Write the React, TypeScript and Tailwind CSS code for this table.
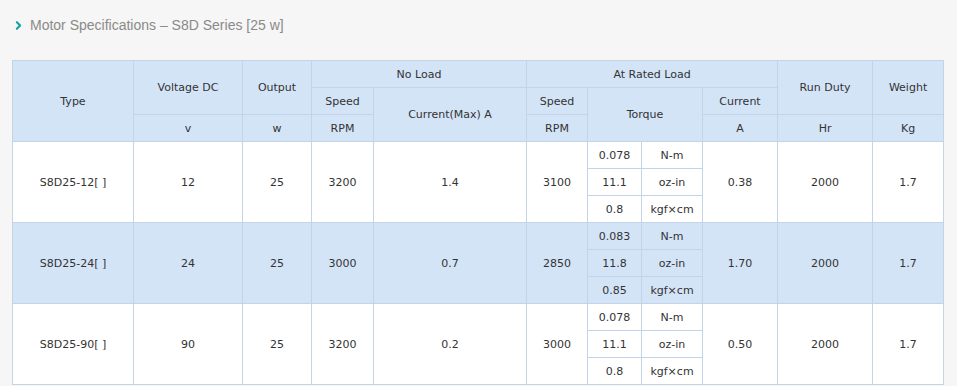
import { ChevronRight } from 'lucide-react'

type Motor = {
    type: string
    voltage: string
    output: string
    noLoadSpeed: string
    noLoadCurrent: string
    ratedSpeed: string
    torque: [string, string, string]
    current: string
    runDuty: string
    weight: string
}

const motors: Motor[] = [
    { type: 'S8D25-12[ ]', voltage: '12', output: '25', noLoadSpeed: '3200', noLoadCurrent: '1.4', ratedSpeed: '3100', torque: ['0.078', '11.1', '0.8'], current: '0.38', runDuty: '2000', weight: '1.7' },
    { type: 'S8D25-24[ ]', voltage: '24', output: '25', noLoadSpeed: '3000', noLoadCurrent: '0.7', ratedSpeed: '2850', torque: ['0.083', '11.8', '0.85'], current: '1.70', runDuty: '2000', weight: '1.7' },
    { type: 'S8D25-90[ ]', voltage: '90', output: '25', noLoadSpeed: '3200', noLoadCurrent: '0.2', ratedSpeed: '3000', torque: ['0.078', '11.1', '0.8'], current: '0.50', runDuty: '2000', weight: '1.7' },
]

const units = ['N-m', 'oz-in', 'kgf×cm']

const cell = 'border border-[#c3d4e8] text-center align-middle px-0 pb-0 pt-[2px]'

export default function App() {
    return (
        <div className="w-[957px] h-[386px] overflow-hidden bg-[#f6f6f6] pl-3 pt-[15px] font-['DejaVu_Sans',sans-serif] text-[11px] text-[#333]">
            {/* Titulo */}
            <div className="flex items-center h-[20px] font-['Liberation_Sans',sans-serif] text-[14px] text-[#8a8a8a]">
                <ChevronRight className="w-[13px] h-[13px] text-[#17a2a7] mr-[5px]" strokeWidth={4} />
                <span>Motor Specifications – S8D Series [25 w]</span>
            </div>

            <table className="mt-[25px] w-[932px] table-fixed border-collapse bg-white">
                <colgroup>
                    <col className="w-[121px]" />
                    <col className="w-[109px]" />
                    <col className="w-[69px]" />
                    <col className="w-[62px]" />
                    <col className="w-[153px]" />
                    <col className="w-[61px]" />
                    <col className="w-[54px]" />
                    <col className="w-[61px]" />
                    <col className="w-[75px]" />
                    <col className="w-[95px]" />
                    <col className="w-[71px]" />
                </colgroup>
                <thead className="bg-[#d4e4f7]">
                    <tr className="h-[27px]">
                        <th rowSpan={3} className={`${cell} font-normal`}>Type</th>
                        <th rowSpan={2} className={`${cell} font-normal`}>Voltage DC</th>
                        <th rowSpan={2} className={`${cell} font-normal`}>Output</th>
                        <th colSpan={2} className={`${cell} font-normal`}>No Load</th>
                        <th colSpan={4} className={`${cell} font-normal`}>At Rated Load</th>
                        <th rowSpan={2} className={`${cell} font-normal`}>Run Duty</th>
                        <th rowSpan={2} className={`${cell} font-normal`}>Weight</th>
                    </tr>
                    <tr className="h-[27px]">
                        <th className={`${cell} font-normal`}>Speed</th>
                        <th rowSpan={2} className={`${cell} font-normal`}>Current(Max) A</th>
                        <th className={`${cell} font-normal`}>Speed</th>
                        <th rowSpan={2} colSpan={2} className={`${cell} font-normal`}>Torque</th>
                        <th className={`${cell} font-normal`}>Current</th>
                    </tr>
                    <tr className="h-[27px]">
                        <th className={`${cell} font-normal`}>v</th>
                        <th className={`${cell} font-normal`}>w</th>
                        <th className={`${cell} font-normal`}>RPM</th>
                        <th className={`${cell} font-normal`}>RPM</th>
                        <th className={`${cell} font-normal`}>A</th>
                        <th className={`${cell} font-normal`}>Hr</th>
                        <th className={`${cell} font-normal`}>Kg</th>
                    </tr>
                </thead>
                {motors.map((m, i) => (
                    <tbody key={m.type} className={i % 2 === 1 ? 'bg-[#d4e4f7]' : 'bg-white'}>
                        {m.torque.map((t, j) => (
                            <tr key={j} className="h-[27px]">
                                {j === 0 && (
                                    <>
                                        <td rowSpan={3} className={cell}>{m.type}</td>
                                        <td rowSpan={3} className={cell}>{m.voltage}</td>
                                        <td rowSpan={3} className={cell}>{m.output}</td>
                                        <td rowSpan={3} className={cell}>{m.noLoadSpeed}</td>
                                        <td rowSpan={3} className={cell}>{m.noLoadCurrent}</td>
                                        <td rowSpan={3} className={cell}>{m.ratedSpeed}</td>
                                    </>
                                )}
                                <td className={cell}>{t}</td>
                                <td className={cell}>{units[j]}</td>
                                {j === 0 && (
                                    <>
                                        <td rowSpan={3} className={cell}>{m.current}</td>
                                        <td rowSpan={3} className={cell}>{m.runDuty}</td>
                                        <td rowSpan={3} className={cell}>{m.weight}</td>
                                    </>
                                )}
                            </tr>
                        ))}
                    </tbody>
                ))}
            </table>
        </div>
    )
}
